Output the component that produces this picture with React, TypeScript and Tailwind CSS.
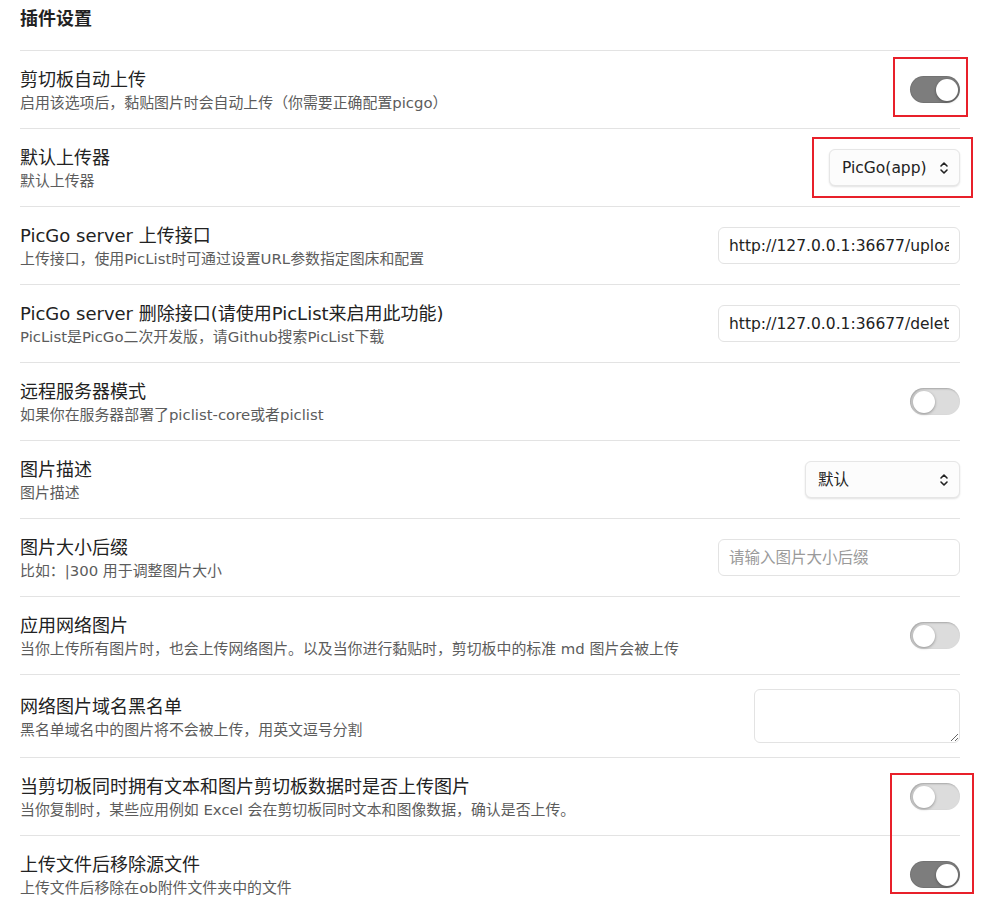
import React from "react";

function Toggle({ on }: { on: boolean }) {
  return (
    <div
      className={
        "relative w-[50px] h-[27px] rounded-full shrink-0 " +
        (on
          ? "bg-[#7d7d7d] shadow-[inset_0_0_0_1px_rgba(0,0,0,0.08)]"
          : "bg-[#dcdcdc] shadow-[inset_1px_1px_2px_rgba(0,0,0,0.25)]")
      }
    >
      <div
        className={
          "absolute top-[2.5px] w-[22px] h-[22px] rounded-full bg-white shadow-[0_1px_3px_rgba(0,0,0,0.35)] " +
          (on ? "left-[26px]" : "left-[3px]")
        }
      />
    </div>
  );
}

function Chevrons() {
  return (
    <svg width="10" height="14" viewBox="0 0 10 14" fill="none" stroke="#222" strokeWidth="1.6" strokeLinecap="round" strokeLinejoin="round">
      <path d="M2 5 L5 2 L8 5" />
      <path d="M2 9 L5 12 L8 9" />
    </svg>
  );
}

function Select({ value, width }: { value: string; width: string }) {
  return (
    <div
      className={
        "h-[37px] rounded-[6px] bg-[#fcfcfc] border border-[#e6e6e6] shadow-[0_1px_2px_rgba(0,0,0,0.12)] flex items-center justify-between pl-[12px] pr-[10px] text-[15.5px] text-[#222] " +
        width
      }
    >
      <span className="pt-[2px]">{value}</span>
      <Chevrons />
    </div>
  );
}

function TextInput({ value, placeholder }: { value?: string; placeholder?: string }) {
  return (
    <div className="w-[242px] h-[37px] rounded-[6px] bg-white border border-[#e3e3e3] flex items-center pl-[10px] pr-[10px] overflow-hidden text-[15.5px] whitespace-nowrap">
      {value ? (
        <span className="text-[#222] overflow-hidden pt-[2px]">{value}</span>
      ) : (
        <span className="text-[#9a9a9a] pt-[2px]">{placeholder}</span>
      )}
    </div>
  );
}

function Row({
  name,
  desc,
  children,
}: {
  name: string;
  desc: string;
  children: React.ReactNode;
}) {
  return (
    <div className="flex items-center justify-between border-t border-[#e3e3e3] py-[14px] gap-4">
      <div className="flex flex-col min-w-0">
        <div className="text-[18px] pt-[3px] leading-[24px] text-[#222] whitespace-nowrap">{name}</div>
        <div className="text-[14.9px] pt-[1px] leading-[21px] text-[#5c5c5c] whitespace-nowrap">{desc}</div>
      </div>
      <div className="shrink-0 flex items-center">{children}</div>
    </div>
  );
}

function RedBox({ children, className }: { children: React.ReactNode; className: string }) {
  return (
    <div className="relative">
      {children}
      <div className={"absolute border-2 border-[#e8202a] pointer-events-none " + className} />
    </div>
  );
}

export default function App() {
  return (
    <div
      className="bg-white min-h-[901px] pl-[20px] pr-[26px] relative overflow-hidden"
      style={{ fontFamily: '"DejaVu Sans", "Noto Sans CJK SC", sans-serif' }}
    >
      <div className="h-[50px] pt-[7px]">
        <div className="text-[18px] leading-[24px] font-bold text-[#222]">插件设置</div>
      </div>

      <Row name="剪切板自动上传" desc="启用该选项后，黏贴图片时会自动上传（你需要正确配置picgo）">
        <RedBox className="-left-[17px] -top-[19px] w-[75px] h-[60px]">
          <Toggle on />
        </RedBox>
      </Row>

      <Row name="默认上传器" desc="默认上传器">
        <RedBox className="-left-[17px] -top-[12px] w-[161px] h-[61px]">
          <Select value="PicGo(app)" width="w-[131px]" />
        </RedBox>
      </Row>

      <Row name="PicGo server 上传接口" desc="上传接口，使用PicList时可通过设置URL参数指定图床和配置">
        <TextInput value="http://127.0.0.1:36677/upload" />
      </Row>

      <Row name="PicGo server 删除接口(请使用PicList来启用此功能)" desc="PicList是PicGo二次开发版，请Github搜索PicList下载">
        <TextInput value="http://127.0.0.1:36677/delete" />
      </Row>

      <Row name="远程服务器模式" desc="如果你在服务器部署了piclist-core或者piclist">
        <Toggle on={false} />
      </Row>

      <Row name="图片描述" desc="图片描述">
        <Select value="默认" width="w-[155px]" />
      </Row>

      <Row name="图片大小后缀" desc="比如：|300 用于调整图片大小">
        <TextInput placeholder="请输入图片大小后缀" />
      </Row>

      <Row name="应用网络图片" desc="当你上传所有图片时，也会上传网络图片。以及当你进行黏贴时，剪切板中的标准 md 图片会被上传">
        <Toggle on={false} />
      </Row>

      <Row name="网络图片域名黑名单" desc="黑名单域名中的图片将不会被上传，用英文逗号分割">
        <textarea className="w-[206px] h-[54px] rounded-[6px] border border-[#e3e3e3] bg-white resize-y outline-none" />
      </Row>

      <div className="relative">
        <Row name="当剪切板同时拥有文本和图片剪切板数据时是否上传图片" desc="当你复制时，某些应用例如 Excel 会在剪切板同时文本和图像数据，确认是否上传。">
          <Toggle on={false} />
        </Row>
        <Row name="上传文件后移除源文件" desc="上传文件后移除在ob附件文件夹中的文件">
          <Toggle on />
        </Row>
        <div className="absolute right-[-14px] top-[16px] w-[84px] h-[121px] border-2 border-[#e8202a] pointer-events-none" />
      </div>
    </div>
  );
}
